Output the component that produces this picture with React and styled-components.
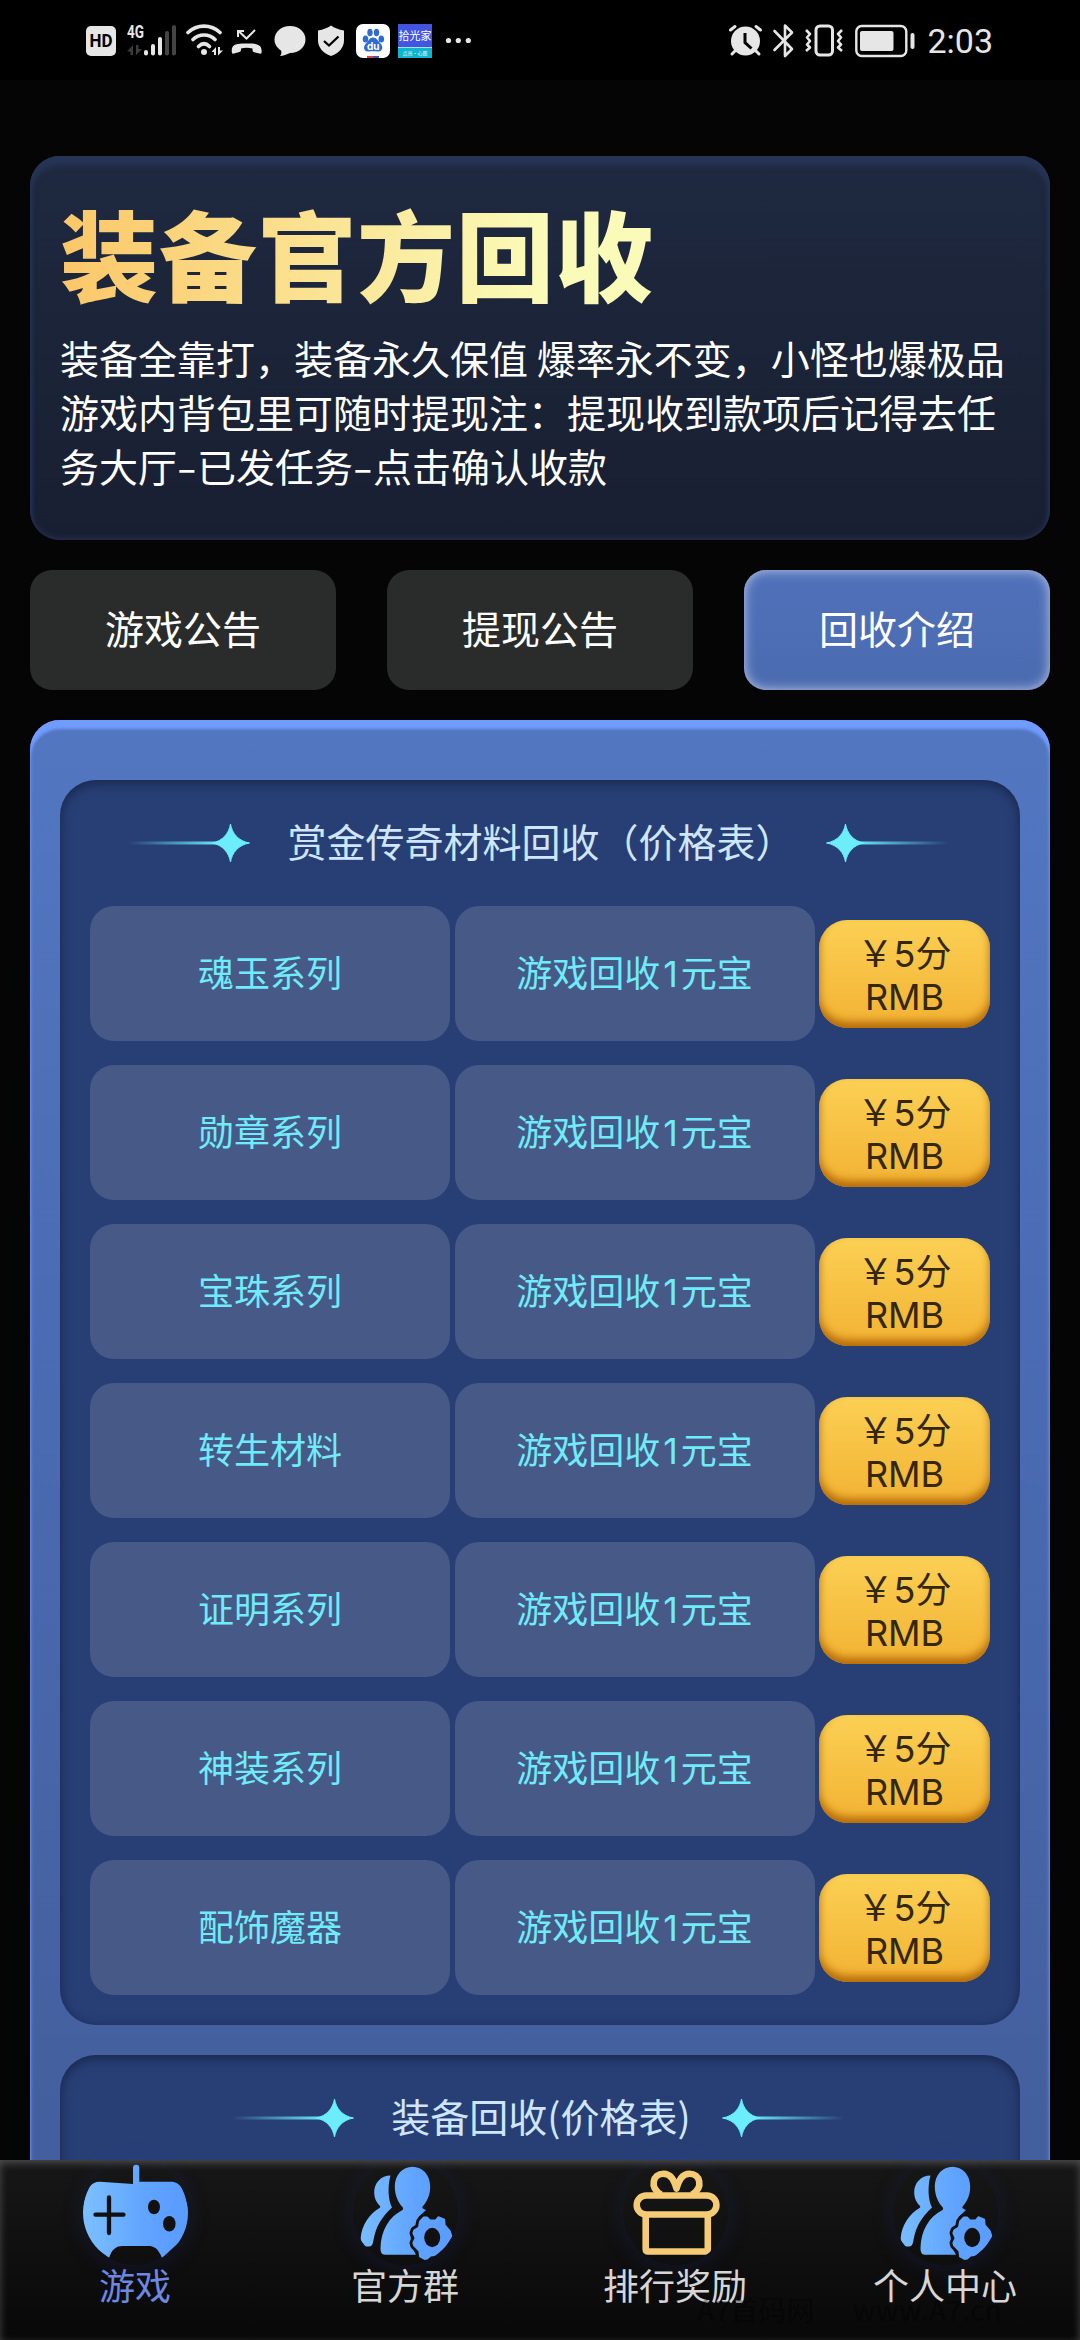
import React from "react";
import styled, { createGlobalStyle } from "styled-components";

const GlobalStyle = createGlobalStyle`
  * {
    box-sizing: border-box;
  }
  body {
    margin: 0;
    background: #050505;
    font-family: "Noto Sans CJK SC", sans-serif;
  }
`;

const Page = styled.div`
  width: 1080px;
  height: 2340px;
  display: flex;
  flex-direction: column;
  overflow: hidden;
  background: #050505;
  color: #fff;
`;

/* status bar */
const StatusBar = styled.header`
  height: 80px;
  flex: none;
  display: flex;
  justify-content: space-between;
  align-items: center;
  padding: 2px 87px 0 86px;
  background: #000;
  color: #e6e6e6;
`;
const StatusGroup = styled.div`
  display: flex;
  align-items: center;
`;
const StatusIcon = styled.svg`
  display: block;
  width: ${({ $w }) => $w}px;
  height: 36px;
  margin-left: ${({ $ml }) => $ml || 0}px;
  overflow: visible;
`;
const AppBadge = styled.div`
  width: 34px;
  height: 34px;
  margin-left: 8px;
  display: flex;
  flex-direction: column;
  overflow: hidden;
  background: #4355e0;
  color: #fff;
  font-size: 11px;
  line-height: 23px;
  text-align: center;
  white-space: nowrap;
`;
const AppBadgeFoot = styled.span`
  height: 11px;
  flex: none;
  border-top: 1px solid #9be6f5;
  background: #10b4cc;
  font-size: 5px;
  line-height: 9px;
`;
const Clock = styled.span`
  margin-left: 12px;
  font-family: Roboto, sans-serif;
  font-size: 34px;
  line-height: 40px;
`;

/* content */
const Content = styled.main`
  flex: 1;
  min-height: 0;
  overflow: hidden;
  padding: 76px 30px 0;
  display: flex;
  flex-direction: column;
  gap: 30px;
`;
const Hero = styled.section`
  height: 384px;
  flex: none;
  padding: 26px 30px 30px;
  border-radius: 30px;
  background: linear-gradient(#1f2941, #1b2438 45%, #191f33);
  box-shadow: inset 0 9px 6px #273556, inset 0 0 6px #2b3a60;
`;
const HeroTitle = styled.h1`
  margin: 0 0 10px;
  font-size: 98px;
  font-weight: 900;
  letter-spacing: 1px;
  line-height: 138px;
  background: linear-gradient(90deg, #fbc768, #fafbb8 50%);
  background-clip: text;
  -webkit-background-clip: text;
  color: transparent;
`;
const HeroText = styled.p`
  margin: 0;
  font-size: 39px;
  line-height: 54px;
  white-space: nowrap;
`;
const Dash = styled.span`
  display: inline-block;
  width: 20px;
  text-align: center;
  transform: scaleX(1.5);
`;
const Tabs = styled.div`
  height: 120px;
  flex: none;
  display: flex;
  justify-content: space-between;
`;
const Tab = styled.button`
  width: 306px;
  border: none;
  border-radius: 22px;
  padding: 0 0 6px;
  font-family: inherit;
  font-size: 39px;
  color: #fff;
  background: ${({ $active }) =>
    $active ? "linear-gradient(#5071ba, #4b6bb0)" : "#2a2c2b"};
  box-shadow: ${({ $active }) =>
    $active ? "inset 0 0 12px rgba(230, 232, 245, 0.75)" : "none"};
`;

const Panel = styled.section`
  flex: none;
  height: 1650px;
  padding: 60px 30px 0;
  display: flex;
  flex-direction: column;
  gap: 30px;
  border-radius: 30px;
  background: linear-gradient(#5277c0, #4b6cb5 35%, #445f9d 85%);
  box-shadow: inset 0 9px 3px #709bff, inset 0 0 5px #6c8be0;
`;
const Card = styled.div`
  flex: none;
  padding: 0 30px 30px;
  border-radius: 36px;
  background: #283f76;
  box-shadow: inset 0 3px 12px rgba(12, 22, 45, 0.6);
`;
const CardHead = styled.div`
  height: 126px;
  display: flex;
  align-items: center;
  justify-content: center;
  padding-right: 4px;
`;
const CardTitle = styled.h2`
  margin: 0 31px 6px 37px;
  font-size: 39px;
  font-weight: 400;
  line-height: 54px;
  color: #cfe6ff;
  white-space: nowrap;
`;
const SparkSvg = styled.svg`
  width: 126px;
  height: 40px;
  flex: none;
  transform: ${({ $flip }) => ($flip ? "scaleX(-1)" : "none")};
`;
const Rows = styled.div`
  display: flex;
  flex-direction: column;
  gap: 24px;
`;
const Row = styled.div`
  height: 135px;
  display: grid;
  grid-template-columns: 360px 360px 171px;
  justify-content: space-between;
  align-items: center;
`;
const Cell = styled.div`
  height: 135px;
  display: flex;
  align-items: center;
  justify-content: center;
  padding-bottom: 6px;
  border-radius: 24px;
  background: #465987;
  color: #6febfa;
  font-size: 36px;
`;
const Latin = styled.span`
  font-family: Inter, sans-serif;
  font-weight: 400;
  line-height: 1;
  padding: 0 ${({ $pad }) => $pad || 0}px;
`;
const Price = styled.div`
  height: 108px;
  padding-top: 10px;
  border-radius: 28px;
  background: linear-gradient(#fbd054, #f2b233);
  box-shadow: inset 0 -6px 9px #b46a08;
  color: #33270c;
  font-size: 36px;
  line-height: 43px;
  text-align: center;
`;

/* bottom navigation */
const Nav = styled.nav`
  position: relative;
  height: 180px;
  flex: none;
  display: grid;
  grid-template-columns: repeat(4, 1fr);
  background: linear-gradient(#171717, #080808);
  box-shadow: inset 0 3px 9px rgba(255, 255, 255, 0.24);
`;
const NavItem = styled.div`
  display: flex;
  flex-direction: column;
  align-items: center;
  font-size: 36px;
  line-height: 39px;
  color: ${({ $active }) => ($active ? "#6c88e2" : "#d6d6d6")};
`;
const NavIcon = styled.svg`
  display: block;
  width: 105px;
  height: 105px;
  flex: none;
  border-radius: 50%;
  box-shadow: 0 3px 24px rgba(50, 70, 190, 0.16);
`;
const Watermark = styled.span`
  position: absolute;
  left: 697px;
  bottom: 11px;
  display: flex;
  gap: 38px;
  font-size: 28px;
  font-weight: 500;
  line-height: 40px;
  white-space: nowrap;
  color: rgba(0, 0, 0, 0.32);
`;

const items = [
  "魂玉系列",
  "勋章系列",
  "宝珠系列",
  "转生材料",
  "证明系列",
  "神装系列",
  "配饰魔器",
];

const Spark = ({ flip, id }) => (
  <SparkSvg $flip={flip} viewBox="0 0 126 40">
    <defs>
      <linearGradient id={id} x1="0" x2="1">
        <stop offset="0" stopColor="#6bedfb" stopOpacity="0" />
        <stop offset="1" stopColor="#6bedfb" />
      </linearGradient>
    </defs>
    <rect x="4" y="18.500" width="94" height="3" fill={`url(#${id})`} />
    <path
      d="M106.500 1C108 10 114 18 125.500 20C114 22 108 30 106.500 39C105 30 99 22 88 20C99 18 105 10 106.500 1Z"
      fill="#6bedfb"
      stroke="#6bedfb"
      strokeWidth="1"
    />
  </SparkSvg>
);

const BlueFill = ({ id }) => (
  <linearGradient id={id} gradientUnits="userSpaceOnUse" x1="0" x2="105">
    <stop offset="0" stopColor="#7cc0ff" />
    <stop offset="0.6" stopColor="#5fa3ff" />
    <stop offset="1" stopColor="#5a9bff" />
  </linearGradient>
);

const GameIcon = () => (
  <NavIcon viewBox="0 0 105 105">
    <defs>
      <BlueFill id="game" />
    </defs>
    <path
      d="M50 24V8a3 3 0 0 1 6.300 0V21.700H88C99 21.700 102 33 106 52L104 75L79 98C75 88 71 86 65 86H40C33 86 29 89 26 98L2 80L-1 52C2 31 6 21.700 17 21.700Z"
      fill="url(#game)"
    />
    <path
      d="M26 37.500V73M12.500 54.700H40.500"
      stroke="#111"
      strokeWidth="4.300"
      strokeLinecap="round"
    />
    <ellipse cx="71" cy="47" rx="6" ry="7.300" fill="#111" />
    <ellipse cx="86.300" cy="63.700" rx="6.300" ry="7.800" fill="#111" />
  </NavIcon>
);

const gear =
  "M70.800 57.500L74.300 57.500L76.800 60.300H82.800L85.300 57.200L91.300 59.700L91.700 65.200L96.800 71L98.500 76.300L91.500 87.300L82.500 95L77.500 95.500L74.200 98.700L71.500 99L67 96.500L66.300 91L61 85.500L60.300 83L62.600 78L60.300 73L61.300 70.300L65.800 67.500L67 61.300Z";

const PeopleIcon = ({ id }) => (
  <NavIcon viewBox="0 0 105 105">
    <defs>
      <BlueFill id={id} />
    </defs>
    <g fill={`url(#${id})`}>
      <path d="M37.500 15.500C28 15.500 21.200 23 21.200 32C21.200 39 24 43 27 46Q28 47 26.500 48C16 54 8.500 66 7.700 78C7.500 84 10 86.500 15 86.500C19 86.500 19.500 85 20.500 80C23 66 29 57 39 47.500C35 40 34.500 26 37.500 15.500Z" />
      <path d="M59.500 6.700C69.500 6.700 77.200 15 77.200 26.500C77.200 36 73.500 42 70 46C68.500 48 69.500 48.500 73 50L65.500 57L62 70L57.500 75L58.500 86L63 94.700H32C28.500 94.700 27.500 92 27.500 88C28 70 36 57 49.500 50Q51 48.500 49 46.500C45 42 41.800 35 41.800 26.500C41.800 15 49.500 6.700 59.500 6.700Z" />
    </g>
    <path d={gear} fill="#111" stroke="#111" strokeWidth="7.500" strokeLinejoin="round" />
    <path d={gear} fill={`url(#${id})`} stroke={`url(#${id})`} strokeWidth="1.800" strokeLinejoin="round" />
    <ellipse cx="79.200" cy="77.500" rx="8" ry="9.700" fill="#111" />
  </NavIcon>
);

const GiftIcon = () => (
  <NavIcon viewBox="0 0 105 105">
    <g fill="none" stroke="#f5cc75" strokeWidth="6.600" strokeLinejoin="round">
      <rect x="13.700" y="35.500" width="79.700" height="19" rx="9.500" />
      <path d="M22.700 55V89Q22.700 91.500 25.200 91.500H82.300Q84.800 91.500 84.800 89V55" />
      <path d="M38 34.500C26 27 30 13.700 40.500 13.700C48 13.700 51 20 53.500 28.500C56 20 59 13.700 66.500 13.700C77 13.700 81 27 69 34.500" />
    </g>
  </NavIcon>
);

const LeftStatus = () => (
  <StatusGroup>
    <StatusIcon $w={30} viewBox="0 0 30 36">
      <rect y="3" width="30" height="30" rx="5" fill="#e6e6e6" />
      <text x="15" y="24.300" textAnchor="middle" fontFamily="Roboto" fontSize="18" fontWeight="700" fill="#000" textLength="23" lengthAdjust="spacingAndGlyphs">
        HD
      </text>
    </StatusIcon>
    <StatusIcon $w={50} $ml={11} viewBox="0 0 50 36" fill="#e6e6e6">
      <text x="0" y="14.500" fontFamily="Roboto" fontSize="18" fontWeight="700" textLength="17" lengthAdjust="spacingAndGlyphs">
        4G
      </text>
      <path d="M6 32V22l-6 6.500h3.500V32ZM9 22v10l6-6h-3.500V22Z" fill="#3c3c3c" />
      <rect x="17" y="27" width="4" height="5.500" rx="2" />
      <rect x="24" y="21" width="4" height="11.500" rx="2" />
      <rect x="31" y="14" width="4" height="18.500" rx="2" />
      <rect x="38" y="8" width="4" height="24.500" rx="2" fill="#444" />
      <rect x="45" y="2" width="4" height="30.500" rx="2" fill="#444" />
    </StatusIcon>
    <StatusIcon $w={37} $ml={9} viewBox="0 0 37 36">
      <g fill="none" stroke="#e6e6e6" strokeWidth="3.700" strokeLinecap="round">
        <path d="M2 9.500C11 1 25 1 34 9.500M7 16.500C13 10.500 23 10.500 29 16.500M12.500 23.500C16 20 20 20 23.500 23.500" />
      </g>
      <circle cx="18" cy="29" r="3" fill="#e6e6e6" />
      <path d="M30 32v-8l-4.500 5H28v3ZM32 24v8.500l5-5h-3V24Z" fill="#e6e6e6" />
    </StatusIcon>
    <StatusIcon $w={31} $ml={8} viewBox="0 0 31 36">
      <path d="M1 30C-1 20 8 20.500 15.500 20.500S32 20 30.500 30Q30 31 28.500 30.500L22.500 29Q21.500 28.500 21.500 26.500V25.500Q15.500 24 10 25.500V27Q10 28.500 8.500 29L3 30.500Q1.500 31 1 30Z" fill="#e6e6e6" />
      <path d="M7 14V8h6M8 8.500l7.500 7L24 7" fill="none" stroke="#e6e6e6" strokeWidth="2" />
    </StatusIcon>
    <StatusIcon $w={32} $ml={12} viewBox="0 0 32 36">
      <path d="M16 3C25 3 31.500 9 31.500 16.500S25 30 16 30C13 31 9 33 6 33C8 31 7.500 29 7 27.500C3 25 .500 21 .500 16.500C.500 9 7 3 16 3Z" fill="#e6e6e6" />
    </StatusIcon>
    <StatusIcon $w={26} $ml={12} viewBox="0 0 26 36">
      <path d="M13 2.500Q18 6 26 7.500V17Q26 28 13 33Q0 28 0 17V7.500Q8 6 13 2.500Z" fill="#e6e6e6" />
      <path d="m6 18 5 4.500 9.500-9" fill="none" stroke="#000" strokeWidth="2.300" />
    </StatusIcon>
    <StatusIcon $w={34} $ml={12} viewBox="0 0 34 36">
      <rect y="1" width="34" height="34" rx="7" fill="#fff" />
      <g fill="#2f6bd0">
        <ellipse cx="9.500" cy="16" rx="2.800" ry="3.600" />
        <ellipse cx="14" cy="9.500" rx="2.700" ry="3.800" />
        <ellipse cx="20.500" cy="9.500" rx="2.700" ry="3.800" />
        <ellipse cx="25.300" cy="16" rx="2.800" ry="3.600" />
        <path d="M17 14.500C20.500 14.500 22 18 24.500 20.500C28 24 26 29 22 28.500C18.500 28 16 28 12.500 28.500C8 29 6.500 24 10 20.500C12.500 18 13.500 14.500 17 14.500Z" />
      </g>
      <text x="17.300" y="26.500" textAnchor="middle" fontFamily="Inter" fontSize="10" fontWeight="700" fill="#fff">
        du
      </text>
      <path d="M11 33h6v2h-6Z" fill="#d8405a" />
      <path d="M17 33h6v2h-6Z" fill="#3b57c4" />
    </StatusIcon>
    <AppBadge>
      拾光家
      <AppBadgeFoot>点亮·心愿</AppBadgeFoot>
    </AppBadge>
    <StatusIcon $w={26} $ml={13} viewBox="0 0 26 36" fill="#e6e6e6">
      <circle cx="3.500" cy="17.500" r="2.600" />
      <circle cx="13.300" cy="17.500" r="2.600" />
      <circle cx="23.300" cy="17.500" r="2.600" />
    </StatusIcon>
  </StatusGroup>
);

const RightStatus = () => (
  <StatusGroup>
    <StatusIcon $w={33} viewBox="0 0 33 36">
      <circle cx="16.500" cy="18" r="14.500" fill="#e6e6e6" />
      <path d="M1.500 7 6 3.500M31.500 7 27 3.500M6 28l-3 3M27 28l3 3" stroke="#e6e6e6" strokeWidth="3" strokeLinecap="round" />
      <path d="M16 10v9.500l6.500 6" fill="none" stroke="#000" strokeWidth="3" />
    </StatusIcon>
    <StatusIcon $w={21} $ml={11} viewBox="0 0 21 36">
      <path d="M1.500 8 19 26 12 33V2.500L19 9.500 1.500 27" fill="none" stroke="#e6e6e6" strokeWidth="2.600" strokeLinejoin="round" strokeLinecap="round" />
    </StatusIcon>
    <StatusIcon $w={38} $ml={11} viewBox="0 0 38 36">
      <g fill="none" stroke="#e6e6e6" strokeWidth="3" strokeLinejoin="round">
        <rect x="11" y="3" width="16.500" height="29" rx="4" />
        <path d="m1 7 4 4-3 3.500 3 3.500-3 3.500 3 3-4 3.500M37 7l-4 4 3 3.500-3 3.500 3 3.500-3 3 4 3.500" strokeWidth="2.600" />
      </g>
    </StatusIcon>
    <StatusIcon $w={60} $ml={12} viewBox="0 0 60 36">
      <rect x="1.300" y="3" width="50" height="30" rx="5.500" fill="none" stroke="#e6e6e6" strokeWidth="2.400" />
      <rect x="5" y="8" width="33.500" height="20" rx="2" fill="#e6e6e6" />
      <rect x="55.500" y="10" width="4" height="16" rx="2" fill="#e6e6e6" />
    </StatusIcon>
    <Clock>2:03</Clock>
  </StatusGroup>
);

const App = () => {
  return (
    <>
      <GlobalStyle />
      <Page>
        <StatusBar>
          <LeftStatus />
          <RightStatus />
        </StatusBar>
        <Content>
          <Hero>
            <HeroTitle>装备官方回收</HeroTitle>
            <HeroText>
              装备全靠打，装备永久保值 爆率永不变，小怪也爆极品
              <br />
              游戏内背包里可随时提现注：提现收到款项后记得去任
              <br />
              务大厅<Dash>-</Dash>已发任务<Dash>-</Dash>点击确认收款
            </HeroText>
          </Hero>
          <Tabs>
            <Tab>游戏公告</Tab>
            <Tab>提现公告</Tab>
            <Tab $active>回收介绍</Tab>
          </Tabs>
          <Panel>
            <Card>
              <CardHead>
                <Spark id="s1" />
                <CardTitle>赏金传奇材料回收（价格表）</CardTitle>
                <Spark id="s2" flip />
              </CardHead>
              <Rows>
                {items.map((name) => (
                  <Row key={name}>
                    <Cell>{name}</Cell>
                    <Cell>
                      <span>
                        游戏回收<Latin $pad={3}>1</Latin>元宝
                      </span>
                    </Cell>
                    <Price>
                      ￥<Latin>5</Latin>分
                      <br />
                      <Latin>RMB</Latin>
                    </Price>
                  </Row>
                ))}
              </Rows>
            </Card>
            <Card>
              <CardHead>
                <Spark id="s3" />
                <CardTitle>装备回收(价格表)</CardTitle>
                <Spark id="s4" flip />
              </CardHead>
            </Card>
          </Panel>
        </Content>
        <Nav>
          <NavItem $active>
            <GameIcon />
            游戏
          </NavItem>
          <NavItem>
            <PeopleIcon id="group" />
            官方群
          </NavItem>
          <NavItem>
            <GiftIcon />
            排行奖励
          </NavItem>
          <NavItem>
            <PeopleIcon id="me" />
            个人中心
          </NavItem>
          <Watermark>
            <span>A7首码网</span>
            <span>www.A7.cn</span>
          </Watermark>
        </Nav>
      </Page>
    </>
  );
};

export default App;
